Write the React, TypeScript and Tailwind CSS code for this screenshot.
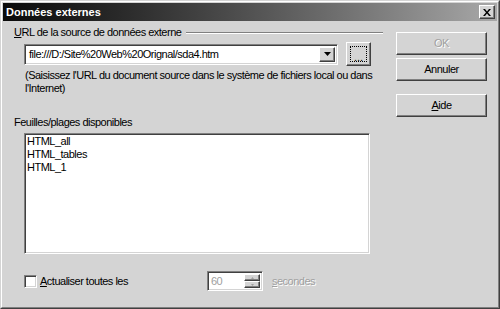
import React from "react";

const raised =
  "border border-t-white border-l-white border-r-[#404040] border-b-[#404040] shadow-[inset_-1px_-1px_0_#808080] bg-[#d4d4d4]";
const sunken =
  "border border-t-[#808080] border-l-[#808080] border-r-white border-b-white shadow-[inset_1px_1px_0_#404040,inset_-1px_-1px_0_#d4d4d4]";

function Btn({ children, disabled, cls }: { children: React.ReactNode; disabled?: boolean; cls?: string }) {
  return (
    <div
      className={`${raised} h-[23px] w-[91px] flex items-center justify-center ${
        disabled ? "text-[#a0a0a0] [text-shadow:1px_1px_0_#fff]" : "text-black"
      } ${cls ?? ""}`}
    >
      {children}
    </div>
  );
}

export default function App() {
  return (
    <div
      className="w-[500px] h-[309px] border border-t-[#d4d4d4] border-l-[#d4d4d4] border-r-[#404040] border-b-[#404040] text-[11px] leading-[13px] tracking-[-0.5px] text-black whitespace-nowrap"
      style={{ fontFamily: '"Liberation Sans", Arial, sans-serif' }}
    >
      <div className="w-full h-full border border-t-white border-l-white border-r-[#808080] border-b-[#808080] bg-[#d4d4d4] p-px flex flex-col">
        {/* Title bar */}
        <div className="h-[18px] flex items-center bg-gradient-to-r from-[#0a0a0a] to-[#a8a8a8] pl-[3px] pr-[2px]">
          <span className="font-bold text-white flex-1 tracking-normal">Données externes</span>
          <div className={`${raised} w-[16px] h-[14px] flex items-center justify-center`}>
            <svg width="8" height="7" viewBox="0 0 8 7">
              <path d="M0 0h2l2 2.5L6 0h2L5 3.5 8 7H6L4 4.5 2 7H0l3-3.5z" fill="#000" />
            </svg>
          </div>
        </div>

        {/* Body */}
        <div className="flex flex-1">
          {/* Left column */}
          <div className="w-[380px] pl-[11px] flex flex-col">
            <div className="mt-[5px] h-[13px] flex items-center">
              <span>
                <span className="underline">U</span>RL de la source de données externe
              </span>
              <div className="flex-1 ml-[5px] h-[2px] border-t border-t-[#808080] border-b border-b-white" />
            </div>

            <div className="ml-[10px] mt-[3px] flex items-center">
              <div className={`${sunken} bg-white w-[314px] h-[21px] flex items-center p-[2px]`}>
                <span className="flex-1 pl-[2px]">file:///D:/Site%20Web%20Orignal/sda4.htm</span>
                <div className={`${raised} w-[16px] h-full flex items-center justify-center`}>
                  <svg width="7" height="4" viewBox="0 0 7 4">
                    <path d="M0 0h7L3.5 4z" fill="#000" />
                  </svg>
                </div>
              </div>
              <div className={`${raised} ml-[8px] w-[25px] h-[24px] p-[3px]`}>
                <div className="w-full h-full border border-dotted border-black flex items-end justify-center leading-[8px] text-[11px] tracking-normal">
                  ...
                </div>
              </div>
            </div>

            <div className="ml-[11px] mt-[3px]">
              (Saisissez l'URL du document source dans le système de fichiers local ou dans
              <br />
              l'Internet)
            </div>

            <div className="mt-[21px]">Feuilles/plages disponibles</div>

            <div className={`${sunken} bg-white ml-[10px] mt-[4px] w-[346px] h-[121px] pt-[1px] pl-[2px]`}>
              <div>HTML_all</div>
              <div>HTML_tables</div>
              <div>HTML_1</div>
            </div>

            <div className="ml-[10px] mt-[17px] flex items-center h-[20px]">
              <div className={`${sunken} bg-white w-[13px] h-[13px]`} />
              <span className="ml-[3px] w-[90px]">
                <span className="underline">A</span>ctualiser toutes les
              </span>
              <div className={`${sunken} bg-white ml-[77px] w-[56px] h-[20px] flex items-center p-[2px]`}>
                <span className="flex-1 pl-[1px] text-[#a0a0a0]">60</span>
                <div className="flex flex-col w-[16px] h-full">
                  <div className={`${raised} flex-1 flex items-center justify-center`}>
                    <svg width="3" height="2" viewBox="0 0 3 2">
                      <path d="M0 2h3L1.5 0z" fill="#a0a0a0" />
                    </svg>
                  </div>
                  <div className={`${raised} flex-1 flex items-center justify-center`}>
                    <svg width="3" height="2" viewBox="0 0 3 2">
                      <path d="M0 0h3L1.5 2z" fill="#a0a0a0" />
                    </svg>
                  </div>
                </div>
              </div>
              <span className="ml-[9px] text-[#a0a0a0] [text-shadow:1px_1px_0_#fff]">
                <span className="underline">s</span>econdes
              </span>
            </div>
          </div>

          {/* Right column */}
          <div className="ml-[13px] pt-[11px] flex flex-col">
            <Btn disabled>OK</Btn>
            <Btn cls="mt-[3px]">Annuler</Btn>
            <Btn cls="mt-[13px]">
              <span>
                <span className="underline">A</span>ide
              </span>
            </Btn>
          </div>
        </div>
      </div>
    </div>
  );
}
